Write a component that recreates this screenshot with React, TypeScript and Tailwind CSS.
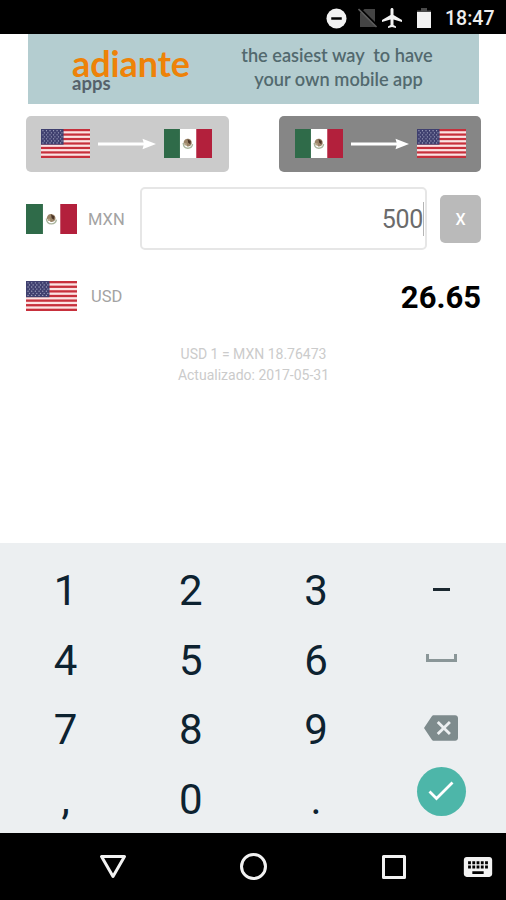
import { MdAirplanemodeActive, MdBackspace, MdKeyboard } from "react-icons/md";

const digit = "pt-[2px] text-[42px] leading-none text-[#0d2230]";

const UsFlag = (props: any) => {
  return (
    <svg viewBox="0 0 50 30" preserveAspectRatio="none" className={props.className}>
      <rect width="50" height="30" fill="#fbe4e4" />
      {[0, 2, 4, 6, 8, 10, 12].map((n) => (
        <rect key={n} y={(n * 30) / 13} width="50" height={30 / 13} fill="#c7303c" />
      ))}
      <rect width="23" height="16.2" fill="#3f406f" />
      {[0, 1, 2, 3, 4, 5, 6].map((row) =>
        [0, 1, 2, 3, 4, 5].map((col) => (
          <circle
            key={`${row}-${col}`}
            cx={2 + col * 3.6 + (row % 2) * 1.4}
            cy={1.8 + row * 2.1}
            r="0.65"
            fill="#a9abc6"
          />
        ))
      )}
    </svg>
  );
};

const MxFlag = (props: any) => {
  return (
    <svg viewBox="0 0 50 30" preserveAspectRatio="none" className={props.className}>
      <rect width="50" height="30" fill="#fff" />
      <rect width="16.6" height="30" fill="#2f6b49" />
      <rect x="33.6" width="16.4" height="30" fill="#b3203c" />
      <path d="M20 14.5c.2 3.500 2.200 5.400 4.900 5.400s4.500-1.600 4.900-4.200" fill="none" stroke="#a9b49d" strokeWidth="1.400" />
      <path d="M20.500 13.200c.8-2.500 3-3.800 5-3 2.300.3 3.700 2.400 3.400 4.800-.6 2.200-2.600 3.400-4.700 3l-2.200-2.400-1.500-.8z" fill="#9a8468" />
      <path d="M24.500 10.300l3.400 2.300-.4 3.200-2.300-1.500z" fill="#4b3426" />
      <circle cx="22.500" cy="15.800" r="1.300" fill="#b5a184" />
    </svg>
  );
};

const Arrow = () => {
  return (
    <svg viewBox="0 0 58 12" className="h-3 w-[58px]">
      <path d="M0 6h47" stroke="#fff" strokeWidth="2.800" />
      <path d="M44.500 .8L58 6l-13.500 5.200 1.500-5.200z" fill="#fff" />
    </svg>
  );
};

const StatusBar = () => {
  return (
    <div className="flex h-[34px] items-center justify-end bg-black pr-[11px] pt-[2px] text-white">
      <svg viewBox="0 0 22 22" className="h-[21px] w-[21px]">
        <circle cx="11" cy="11" r="10.500" fill="#f2f2f2" />
        <rect x="5.500" y="9.700" width="11" height="2.600" fill="#000" />
      </svg>
      <svg viewBox="0 0 20 20" className="ml-[11px] h-5 w-5">
        <path d="M6.500 1H17v18H2V5z" fill="#444" />
        <path d="M1.500 0l18 18" stroke="#000" strokeWidth="2" />
        <path d="M.500 1l18 18" stroke="#5c5c5c" strokeWidth="1.600" />
      </svg>
      <MdAirplanemodeActive className="ml-[2px] h-6 w-6 text-[#f2f2f2]" />
      <svg viewBox="0 0 14 22" className="ml-[13px] h-[22px] w-[14px]">
        <path d="M4 1h6v2.500h4V6H0V3.500h4z" fill="#4a4a4a" />
        <rect y="5" width="14" height="16" fill="#f2f2f2" />
      </svg>
      <p className="ml-[14px] w-[50px] whitespace-nowrap pt-px text-[19.500px] font-medium leading-none text-[#eee]">18:47</p>
    </div>
  );
};

const Banner = () => {
  return (
    <div className="ml-[28px] flex h-[70px] w-[451px] bg-[#b4cdd0]">
      <div className="ml-[44px] w-[164px] pt-[11px] font-['Lato']">
        <p className="h-[31px] text-[36px] font-bold leading-[37px] tracking-[-0.1px] text-[#ee8208]">adiante</p>
        <p className="text-[18.500px] font-bold leading-[15px] text-[#56616a]">apps</p>
      </div>
      <div className="w-[202px] whitespace-pre pt-[9px] text-center font-['Lato'] text-[18.200px] font-semibold leading-[24px] text-[#52696e]">
        <p>the easiest way  to have</p>
        <p className="pl-[3px]">your own mobile app</p>
      </div>
    </div>
  );
};

const Converter = () => {
  return (
    <div className="h-[439px] bg-white pl-[26px] pr-[25px]">
      <div className="flex justify-between pt-[12px]">
        <button className="flex h-[56px] w-[203px] items-center justify-between rounded-[5px] bg-[#cbcbcb] pb-px pl-[15px] pr-[17px]">
          <UsFlag className="h-[29px] w-[49px]" />
          <Arrow />
          <MxFlag className="h-[29px] w-[48px]" />
        </button>
        <button className="flex h-[56px] w-[202px] items-center justify-between rounded-[5px] bg-[#868686] pb-px pl-4 pr-[15px]">
          <MxFlag className="h-[29px] w-[48px]" />
          <Arrow />
          <UsFlag className="h-[29px] w-[49px]" />
        </button>
      </div>
      <div className="mt-[15px] flex h-[63px] items-center">
        <MxFlag className="h-[30px] w-[51px]" />
        <p className="ml-[11px] w-[52px] pt-[3px] text-[16.500px] text-[#a3a3a3]">MXN</p>
        <div className="flex h-[63px] w-[287px] items-center justify-end rounded-[5px] border-2 border-[#e6e6e6] pr-px">
          <p className="pt-[3px] text-[25px] tracking-[-0.3px] text-[#6b6b6b]">500</p>
          <span className="h-[34px] w-px bg-[#b5b5b5]" />
        </div>
        <button className="ml-[13px] h-[48px] w-[41px] rounded-[5px] bg-[#bababa] pt-[2px] text-[16px] font-medium text-white">X</button>
      </div>
      <div className="mt-[30px] flex h-[32px] items-center">
        <UsFlag className="h-[30px] w-[51px]" />
        <p className="ml-[14px] pt-[3px] text-[16.500px] text-[#a3a3a3]">USD</p>
        <p className="ml-auto pt-[3px] text-[31px] font-bold leading-none text-black">26.65</p>
      </div>
      <div className="mt-[32px] text-center text-[14px] leading-[21px] text-[#cbcbcb]">
        <p>USD 1 = MXN 18.76473</p>
        <p>Actualizado: 2017-05-31</p>
      </div>
    </div>
  );
};

const Keyboard = () => {
  return (
    <div className="grid h-[290px] grid-cols-[repeat(4,125.250px)] grid-rows-[repeat(4,69.700px)] place-items-center bg-[#eceff1] pl-[3px] pt-[12px]">
      <p className={digit}>1</p>
      <p className={digit}>2</p>
      <p className={digit}>3</p>
      <span className="h-[3px] w-[17px] bg-[#1b2830]" />
      <p className={digit}>4</p>
      <p className={digit}>5</p>
      <p className={digit}>6</p>
      <span className="mb-1 h-[8px] w-[31px] border-[3px] border-t-0 border-[#8a9698]" />
      <p className={digit}>7</p>
      <p className={digit}>8</p>
      <p className={digit}>9</p>
      <MdBackspace className="mb-[3px] h-[34px] w-[34px] text-[#7e8b8d]" />
      <p className={digit}>,</p>
      <p className={digit}>0</p>
      <p className={digit}>.</p>
      <div className="mb-[15px] flex h-[49px] w-[49px] items-center justify-center rounded-full bg-[#4db6a9]">
        <svg viewBox="0 0 26 20" className="h-5 w-[26px]">
          <path d="M1.500 10.500l7 7L24.500 1.500" fill="none" stroke="#fff" strokeWidth="2.800" />
        </svg>
      </div>
    </div>
  );
};

const NavBar = () => {
  return (
    <div className="flex h-[67px] items-center bg-black text-[#f2f2f2]">
      <svg viewBox="0 0 28 26" className="ml-[99px] h-[26px] w-[28px]" fill="none" stroke="currentColor" strokeWidth="3" strokeLinejoin="round">
        <path d="M2.500 2.500h23L14 22.500z" />
      </svg>
      <svg viewBox="0 0 28 28" className="ml-[112px] h-[28px] w-[28px]" fill="none" stroke="currentColor" strokeWidth="3">
        <circle cx="14.500" cy="13.500" r="12" />
      </svg>
      <svg viewBox="0 0 26 26" className="ml-[114px] h-[26px] w-[26px]" fill="none" stroke="currentColor" strokeWidth="3" strokeLinejoin="round">
        <rect x="2.500" y="2.500" width="21" height="21" />
      </svg>
      <MdKeyboard className="ml-[54px] h-[34px] w-[34px]" />
    </div>
  );
};

const App = () => {
  return (
    <div className="h-[900px] w-[506px] overflow-hidden bg-white font-['Roboto',sans-serif]">
      <StatusBar />
      <Banner />
      <Converter />
      <Keyboard />
      <NavBar />
    </div>
  );
};

export default App;
